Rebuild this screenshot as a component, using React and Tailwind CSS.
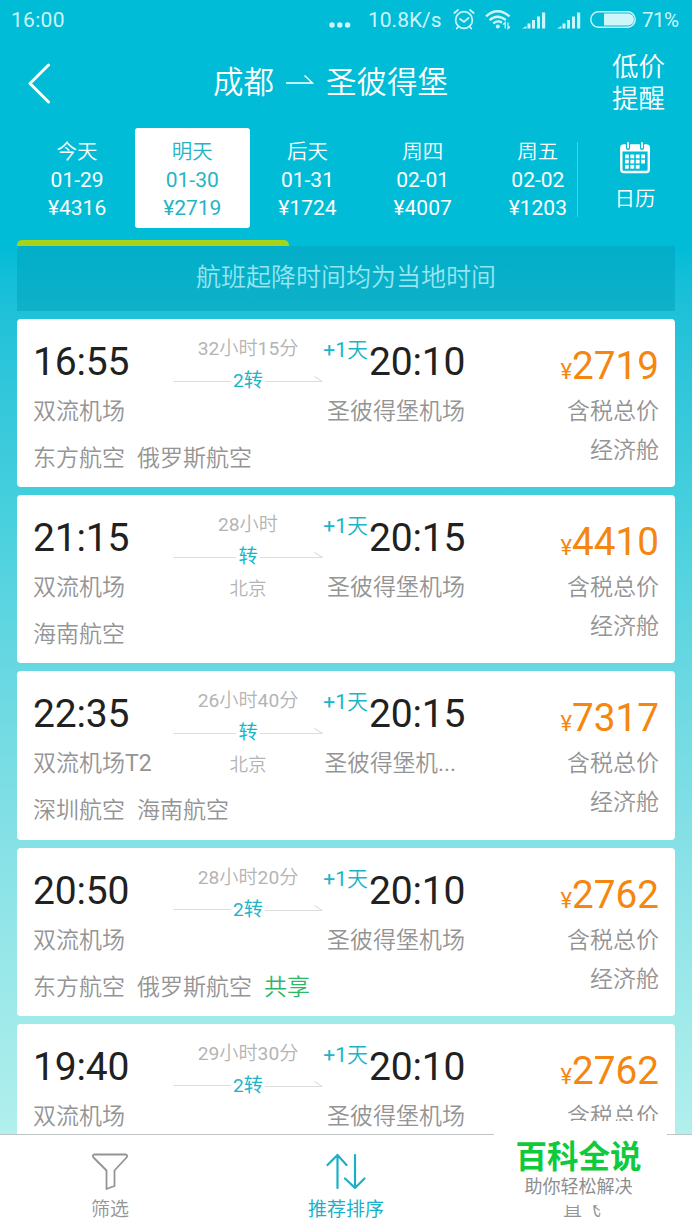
import { clsx } from 'clsx';

const days = [
  { label: '今天', date: '01-29', price: 4316 },
  { label: '明天', date: '01-30', price: 2719, active: true },
  { label: '后天', date: '01-31', price: 1724 },
  { label: '周四', date: '02-01', price: 4007 },
  { label: '周五', date: '02-02', price: 1203 },
];

const flights = [
  {
    depart: '16:55',
    arrive: '20:10',
    from: '双流机场',
    to: '圣彼得堡机场',
    duration: '32小时15分',
    transfer: '2转',
    airlines: ['东方航空', '俄罗斯航空'],
    price: 2719,
  },
  {
    depart: '21:15',
    arrive: '20:15',
    from: '双流机场',
    to: '圣彼得堡机场',
    duration: '28小时',
    transfer: '转',
    via: '北京',
    airlines: ['海南航空'],
    price: 4410,
  },
  {
    depart: '22:35',
    arrive: '20:15',
    from: '双流机场T2',
    to: '圣彼得堡机...',
    duration: '26小时40分',
    transfer: '转',
    via: '北京',
    airlines: ['深圳航空', '海南航空'],
    price: 7317,
  },
  {
    depart: '20:50',
    arrive: '20:10',
    from: '双流机场',
    to: '圣彼得堡机场',
    duration: '28小时20分',
    transfer: '2转',
    airlines: ['东方航空', '俄罗斯航空'],
    shared: true,
    price: 2762,
  },
  {
    depart: '19:40',
    arrive: '20:10',
    from: '双流机场',
    to: '圣彼得堡机场',
    duration: '29小时30分',
    transfer: '2转',
    airlines: ['东方航空', '俄罗斯航空'],
    price: 2762,
  },
];

// Latin letters and digits keep the regular weight inside lighter Chinese text
function Mixed({ text }) {
  return text.split(/([\x20-\x7e]+)/).map((part, i) =>
    i % 2 ? (
      <span key={i} className="font-normal">
        {part}
      </span>
    ) : (
      part
    )
  );
}

function Signal() {
  return (
    <svg width="24" height="17" viewBox="0 0 24 17" fill="currentColor">
      <path d="M0 16.5 4.5 14v2.5z" />
      <rect x="5.5" y="11.5" width="3" height="5" />
      <rect x="10" y="8" width="3" height="8.5" />
      <rect x="15" y="4.5" width="3" height="12" />
      <rect x="20" y="0.5" width="3.2" height="16" />
    </svg>
  );
}

function StatusBar() {
  return (
    <div className="flex h-10 items-center pr-3 pl-[11px] text-[21px] text-[#cdf6fa]">
      <span className="pt-0.5 tracking-[0.3px]">16:00</span>
      <svg className="mt-2.5 ml-auto" width="22" height="6" viewBox="0 0 22 6" fill="currentColor">
        <circle cx="3" cy="3" r="2.7" />
        <circle cx="10.8" cy="3" r="2.7" />
        <circle cx="18.6" cy="3" r="2.7" />
      </svg>
      <span className="ml-[17px] w-[74px] pt-0.5">10.8K/s</span>
      <svg className="ml-[11px]" width="22" height="22" viewBox="0 0 22 22" fill="none" stroke="currentColor" strokeWidth="1.7" strokeLinecap="round">
        <circle cx="11" cy="11" r="8.4" />
        <path d="M7 10 11 13 15.5 9M1.3 4 5 1M20.7 4 17 1M5 18 3.8 19.5M17 18l1.2 1.5" />
      </svg>
      <svg className="ml-2.5" width="27" height="20" viewBox="0 0 27 20" fill="none" stroke="currentColor" strokeWidth="2.3">
        <path d="M1 6.3Q12.5-3.7 24.5 6.3M4.6 10.1Q12.5 3.3 20.8 10.1M8.2 13.5Q12.5 9.8 17 12.7" />
        <circle cx="12.8" cy="16.5" r="2" fill="currentColor" stroke="none" />
        <path strokeWidth="1.3" d="M20.2 18.5v-6l-2 2M23 12.5v6l2-2" />
      </svg>
      <div className="ml-2.5 flex gap-[11px]">
        <Signal />
        <Signal />
      </div>
      <svg className="-mt-0.5 ml-[9px]" width="46" height="17" viewBox="0 0 46 17">
        <rect x="0.8" y="0.8" width="44.4" height="15.4" rx="7.7" fill="none" stroke="currentColor" strokeWidth="1.4" />
        <path d="M14 2.5h24a6 6 0 0 1 0 12H14z" fill="currentColor" />
      </svg>
      <span className="ml-1.5 w-[38px] pt-px text-[20.5px] tracking-[-0.5px]">71%</span>
    </div>
  );
}

function TitleBar() {
  return (
    <div className="flex h-[88px] items-center pr-[27px] pl-7 text-white">
      <svg className="-mt-0.5 w-[180px] shrink-0" height="42" viewBox="0 0 180 42" fill="none" stroke="currentColor" strokeWidth="3" strokeLinecap="round" strokeLinejoin="round">
        <path d="M20.5 3 2 21.5 20.5 40" />
      </svg>
      <h1 className="-mt-0.5 flex flex-1 items-center pl-[5px] text-[30.5px] leading-10 font-[350]">
        成都
        <svg className="-mt-1.5 mr-3 ml-3" width="28" height="12" viewBox="0 0 28 12" fill="none" stroke="currentColor" strokeWidth="1.4">
          <path d="M0 9h26.5L18.5 1.5" />
        </svg>
        圣彼得堡
      </h1>
      <button className="-mt-0.5 w-[53px] text-[26.5px] leading-8 font-[350]">低价提醒</button>
    </div>
  );
}

function CalendarIcon() {
  const dots = [0, 1, 2, 3].flatMap((c) => [0, 1, 2].map((r) => [c, r]));
  return (
    <svg width="30" height="32" viewBox="0 0 30 32">
      <rect x="1.3" y="3.5" width="27.5" height="26.5" rx="2.5" fill="none" stroke="white" strokeWidth="2.4" />
      <path d="M1 3.5h28v6H1z" fill="white" />
      <path d="M8 1v5M22 1v5" stroke="#00bcd7" strokeWidth="4.2" strokeLinecap="round" />
      <path d="M8 1v4.5M22 1v4.5" stroke="white" strokeWidth="2" strokeLinecap="round" />
      {dots
        .filter(([c, r]) => !(c === 3 && r === 2))
        .map(([c, r]) => (
          <rect key={`${c}${r}`} x={5 + c * 5.4} y={12.5 + r * 5.2} width="3.8" height="3.8" fill="white" />
        ))}
    </svg>
  );
}

function DateStrip() {
  return (
    <div className="flex h-28 items-start pl-[19.5px] text-[21px] leading-7 text-white">
      {days.map((day) => (
        <div
          key={day.date}
          className={clsx(
            'flex h-[100px] w-[115.2px] flex-col items-center rounded-[3px] pt-2.5',
            day.active && 'bg-white text-[#26b4c3]'
          )}
        >
          <span className="text-[20.5px] font-[350]">{day.label}</span>
          <span>{day.date}</span>
          <span>¥{day.price}</span>
        </div>
      ))}
      <div className="-ml-[18.5px] mt-3.5 h-[75px] w-px bg-[#45d2e4]" />
      <div className="flex flex-1 flex-col items-center pt-[14px]">
        <CalendarIcon />
        <span className="mt-[11px] text-[20.5px] font-[350]">日历</span>
      </div>
    </div>
  );
}

function FlightCard({ flight }) {
  const truncated = flight.to.endsWith('...');

  return (
    <div className="flex h-[168.2px] shrink-0 rounded-[4px] bg-white px-4 text-[23px] font-[350] text-[#949494]">
      <div className="w-[432px] pt-5">
        <div className="flex h-[98px]">
          <div className="w-[140px]">
            <div className="h-12 text-[39px] leading-[46px] font-normal tracking-[-0.2px] text-[#212121]">{flight.depart}</div>
            <div className="leading-[50px]">
              <Mixed text={flight.from} />
            </div>
          </div>
          <div className="w-[150px] text-center text-[19.2px] text-[#b4b4b4]">
            <div className="leading-5">
              <Mixed text={flight.duration} />
            </div>
            <div className="mt-2.5 flex h-6 items-center leading-6 text-[#1bb5c8]">
              <div className="h-px flex-1 bg-[#dedede]" />
              <span className="px-0.5 font-normal">{flight.transfer}</span>
              <svg className="flex-1" height="12" viewBox="0 0 58 12" preserveAspectRatio="xMaxYMid slice" fill="none" stroke="#dedede">
                <path d="M-9 6.5H57L49.5 1.5" />
              </svg>
            </div>
            <div className="pt-1 leading-8 text-[18.5px]">{flight.via}</div>
          </div>
          <div className="flex-1">
            <div className="flex h-12 items-start justify-end">
              <span className="text-[21px] leading-[22px] text-[#1bb5c8]">
                <Mixed text="+1天" />
              </span>
              <span className="w-[97px] pl-px text-[39px] leading-[46px] font-normal tracking-[-0.2px] text-[#212121]">{flight.arrive}</span>
            </div>
            <div
              className={clsx(
                'text-right leading-[50px] whitespace-nowrap',
                truncated && 'pr-[9px] text-[22.7px]'
              )}
            >
              <Mixed text={flight.to} />
            </div>
          </div>
        </div>
        <div className="flex gap-3 leading-[43px]">
          {flight.airlines.map((name) => (
            <span key={name}>{name}</span>
          ))}
          {flight.shared && <span className="text-[#2fb768]">共享</span>}
        </div>
      </div>
      <div className="flex-1 pt-[23px] text-right">
        <div className="h-[49px] leading-[48px] font-normal text-[#f5860f]">
          <span className="text-[22px]">¥</span>
          <span className="text-[38.7px]">{flight.price}</span>
        </div>
        <div className="leading-[42px]">含税总价</div>
        <div className="leading-9">经济舱</div>
      </div>
    </div>
  );
}

function TabBar() {
  return (
    <div className="flex h-24 justify-center border-t border-[#bfc4c4] bg-white text-[19px] leading-6 font-[350] text-[#949494]">
      <button className="flex w-[236px] shrink-0 flex-col items-center pt-[18px]">
        <svg width="38" height="38" viewBox="0 0 38 38" fill="none" stroke="currentColor" strokeWidth="1.8" strokeLinejoin="round">
          <path d="M3 1.5H35Q37 2.5 35.5 4.5L23.5 17.5V33L15.5 36V17.5L2.5 4.5Q1 2.5 3 1.5z" />
        </svg>
        <span className="mt-[7px]">筛选</span>
      </button>
      <button className="flex w-[236px] shrink-0 flex-col items-center pt-[18px] text-[#1bb0c8]">
        <svg width="40" height="38" viewBox="0 0 40 38" fill="none" stroke="currentColor" strokeWidth="2.2" strokeLinecap="round" strokeLinejoin="round">
          <path d="M11.5 35V2M1.5 12 11.5 2l9 10M29 2v33M19 25.5 29 35l9.5-9.5" />
        </svg>
        <span className="mt-[7px] font-normal">推荐排序</span>
      </button>
      <button className="flex w-[236px] shrink-0 flex-col items-center pt-[63px]">直飞</button>
    </div>
  );
}

export default function App() {
  return (
    <div className="relative flex h-[1230px] w-[692px] flex-col overflow-hidden bg-linear-to-b from-[#00bcd7] from-[20%] via-[#47d0de] via-[42%] to-[#b2f0ed] to-[93%] font-['Roboto','Noto_Sans_CJK_SC',sans-serif]">
      <StatusBar />
      <TitleBar />
      <DateStrip />
      <div className="mr-[17px] ml-[17px] flex min-h-0 flex-1 flex-col overflow-hidden">
        <div className="h-1.5 w-[272px] shrink-0 rounded-t-[5px] bg-[#a5d41a]" />
        <div className="h-[65px] shrink-0 bg-linear-to-b from-[#02aec9] to-[#0eb1c8] text-center text-[25px] leading-[64px] font-[350] text-[#96e5f1]">
          航班起降时间均为当地时间
        </div>
        <div className="mt-2 flex flex-col gap-2">
          {flights.map((flight) => (
            <FlightCard key={flight.depart} flight={flight} />
          ))}
        </div>
      </div>
      <TabBar />
      <div className="absolute top-[1121px] left-[494px] flex h-[84px] w-[173px] flex-col items-center bg-white pr-1">
        <span className="pt-3 font-['Noto_Sans_CJK_SC',sans-serif] text-[31.5px] leading-[42px] font-bold text-[#0fca3b]">百科全说</span>
        <span className="mt-0.5 text-[18px] leading-5 text-[#8e8e8e]">助你轻松解决</span>
      </div>
    </div>
  );
}
